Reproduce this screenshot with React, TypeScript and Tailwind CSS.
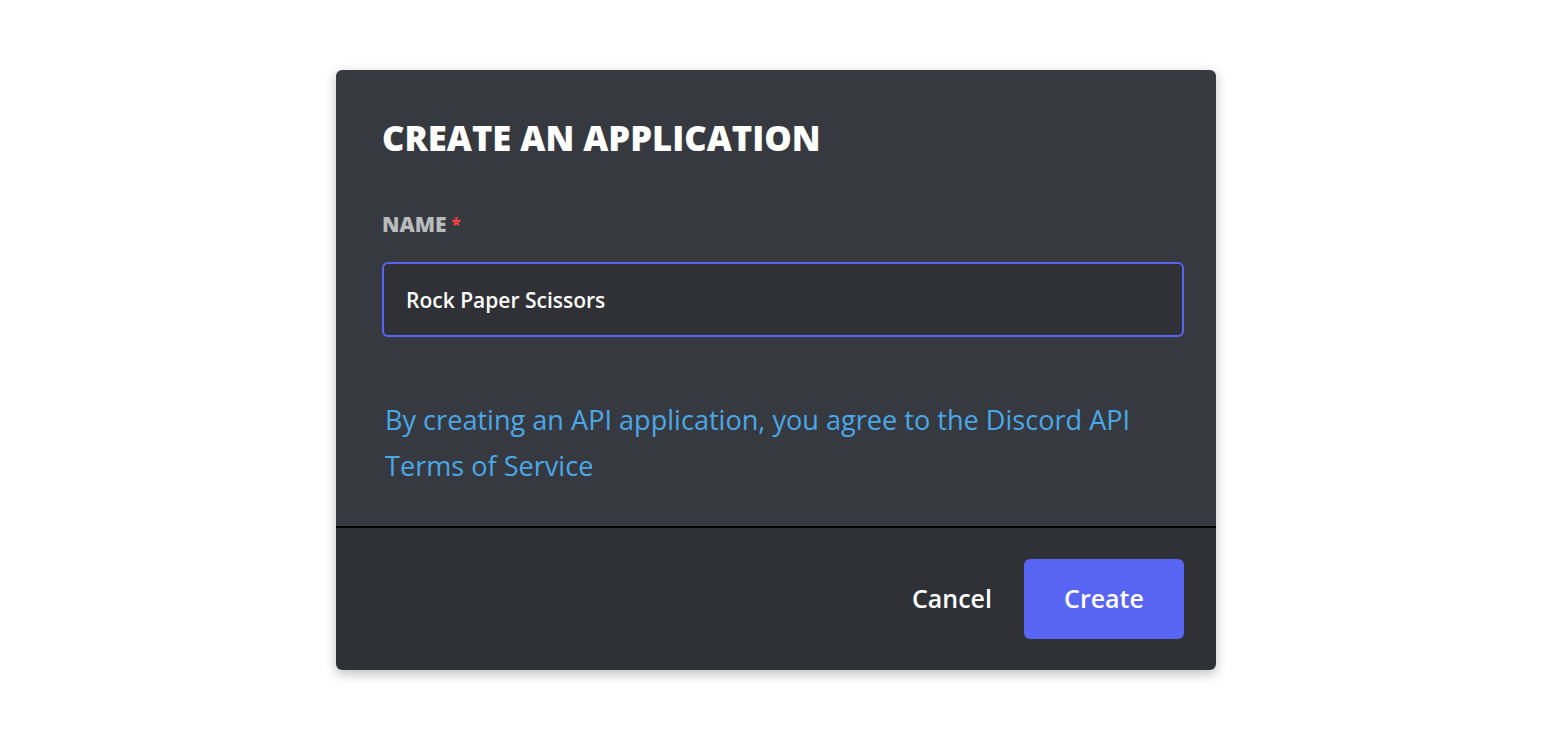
export default function App() {
  return (
    <div className="min-h-[740px] bg-white flex justify-center pt-[70px] font-['Open_Sans',sans-serif]">
      <div className="w-[880px] h-[600px] rounded-[6px] overflow-hidden shadow-[0_4px_12px_rgba(0,0,0,0.25)] flex flex-col">
        {/* Body */}
        <div className="h-[456px] bg-[#36393f] pl-[46px] pr-[32px] pt-[48px]">
          <h1 className="text-[34.6px] leading-[40px] font-extrabold text-white">
            CREATE AN APPLICATION
          </h1>
          <div className="mt-[55px] flex items-center text-[21px] leading-[22px] font-extrabold text-[#b9bbbe]">
            NAME<span className="ml-[5px] text-[#ed4245] text-[17px]">*</span>
          </div>
          <div className="mt-[27px] h-[75px] rounded-[6px] border-2 border-[#5865f2] bg-[#303136] flex items-center px-[22px] pt-[3px]">
            <span className="text-[21px] font-semibold text-white">Rock Paper Scissors</span>
          </div>
          <p className="mt-[60px] pl-[3px] text-[27.1px] leading-[46px] text-[#4aa8e8] pr-[40px]">
            By creating an API application, you agree to the Discord API Terms of Service
          </p>
        </div>
        <div className="h-[2px] bg-[#050505]" />
        {/* Footer */}
        <div className="flex-1 bg-[#2f3136] flex items-center justify-end px-[32px] gap-[32px]">
          <button className="text-[25px] font-semibold text-white">Cancel</button>
          <button className="w-[160px] h-[80px] rounded-[6px] bg-[#5865f2] text-[25px] font-semibold text-white">
            Create
          </button>
        </div>
      </div>
    </div>
  );
}
